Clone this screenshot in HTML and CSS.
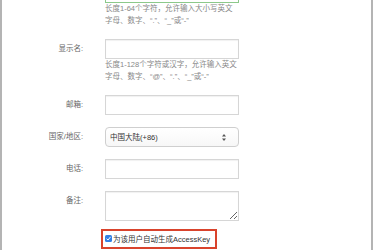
FILE: index.html
```html
<!DOCTYPE html>
<html lang="zh-CN">
<head>
  <meta charset="UTF-8">
  <meta name="viewport" content="width=device-width, initial-scale=1.0">
  <title>新建用户</title>
  <link rel="stylesheet" href="styles.css">
</head>
<body>
  <div class="panel">
    <form class="user-form">
      <div class="row">
        <span class="row-label"></span>
        <div class="row-field">
          <input class="field field-ok" id="login-name" type="text" aria-label="登录名">
          <p class="hint">长度1-64个字符，允许输入大小写英文<br>字母、数字、“.”、“_”或“-”</p>
        </div>
      </div>

      <div class="row">
        <label class="row-label" for="display-name">显示名:</label>
        <div class="row-field">
          <input class="field" id="display-name" type="text">
          <p class="hint">长度1-128个字符或汉字，允许输入英文<br>字母、数字、“@”、“.”、“_”或“-”</p>
        </div>
      </div>

      <div class="row">
        <label class="row-label" for="email">邮箱:</label>
        <div class="row-field">
          <input class="field" id="email" type="text">
        </div>
      </div>

      <div class="row">
        <label class="row-label" for="country">国家/地区:</label>
        <div class="row-field">
          <div class="select-wrap">
            <select class="field field-select" id="country">
              <option>中国大陆(+86)</option>
              <option>中国香港(+852)</option>
              <option>中国台湾(+886)</option>
            </select>
            <svg class="select-arrows" width="4" height="7" viewBox="0 0 4 7">
              <path d="M2 0 L4 2.6 L0 2.6 Z M2 7 L4 4.4 L0 4.4 Z" fill="#555"/>
            </svg>
          </div>
        </div>
      </div>

      <div class="row">
        <label class="row-label" for="phone">电话:</label>
        <div class="row-field">
          <input class="field" id="phone" type="text">
        </div>
      </div>

      <div class="row row-tight">
        <label class="row-label" for="remark">备注:</label>
        <div class="row-field">
          <textarea class="field field-area" id="remark"></textarea>
        </div>
      </div>

      <div class="row">
        <span class="row-label"></span>
        <div class="row-field">
          <label class="check-box">
            <svg class="check-mark" width="7" height="7" viewBox="0 0 7 7">
              <rect width="7" height="7" rx="1.5" fill="#3480e3"/>
              <path d="M1.6 3.7 L3 5 L5.5 1.9" fill="none" stroke="#fff" stroke-width="1"/>
            </svg>
            为该用户自动生成AccessKey
          </label>
        </div>
      </div>
    </form>
  </div>
</body>
</html>
```

FILE: styles.css
```css
body {
  margin: 0;
  font-family: "Liberation Sans", "Noto Sans CJK SC", sans-serif;
  background: #fff;
}

.panel {
  width: 369px;
  min-height: 100vh;
  border-left: 2px solid #b4b4b4;
  border-right: 2px solid #b4b4b4;
  overflow: hidden;
}

.user-form {
  margin-top: -17px;
}

.row {
  display: grid;
  grid-template-columns: 81px 134px;
  column-gap: 22px;
  margin-bottom: 12px;
}

.row-tight {
  margin-bottom: 7px;
}

.row-label {
  text-align: right;
  padding-top: 4px;
  font-size: 7.5px;
  line-height: 12px;
  color: #666;
}

.field {
  display: block;
  box-sizing: border-box;
  width: 134px;
  height: 20px;
  margin: 0;
  padding: 0 5px;
  border: 1px solid #d6d6d6;
  border-radius: 0;
  background: #fff;
  box-shadow: inset 0 1px 1px rgba(0, 0, 0, 0.06);
  font-family: inherit;
  font-size: 7.5px;
  color: #444;
  outline: none;
}

.field-ok {
  border-color: #8cc98a;
}

.hint {
  margin: 0;
  font-size: 7.5px;
  line-height: 12px;
  color: #888;
  white-space: nowrap;
}

.select-wrap {
  position: relative;
}

.field-select {
  appearance: none;
  -webkit-appearance: none;
  padding-left: 4px;
  border-color: #cfcfcf;
  border-radius: 4px;
  background: linear-gradient(#fff, #f7f7f7);
  box-shadow: none;
  color: #333;
}

.select-arrows {
  position: absolute;
  right: 13px;
  top: 7px;
}

.field-area {
  height: 30px;
  resize: vertical;
  padding: 3px 5px;
}

.check-box {
  display: inline-flex;
  align-items: center;
  box-sizing: border-box;
  height: 20px;
  margin-left: -4px;
  padding: 0 5px 0 2px;
  border: 2px solid #d9432c;
  font-size: 7.5px;
  color: #333;
}

.check-mark {
  margin-right: 1px;
}
```
